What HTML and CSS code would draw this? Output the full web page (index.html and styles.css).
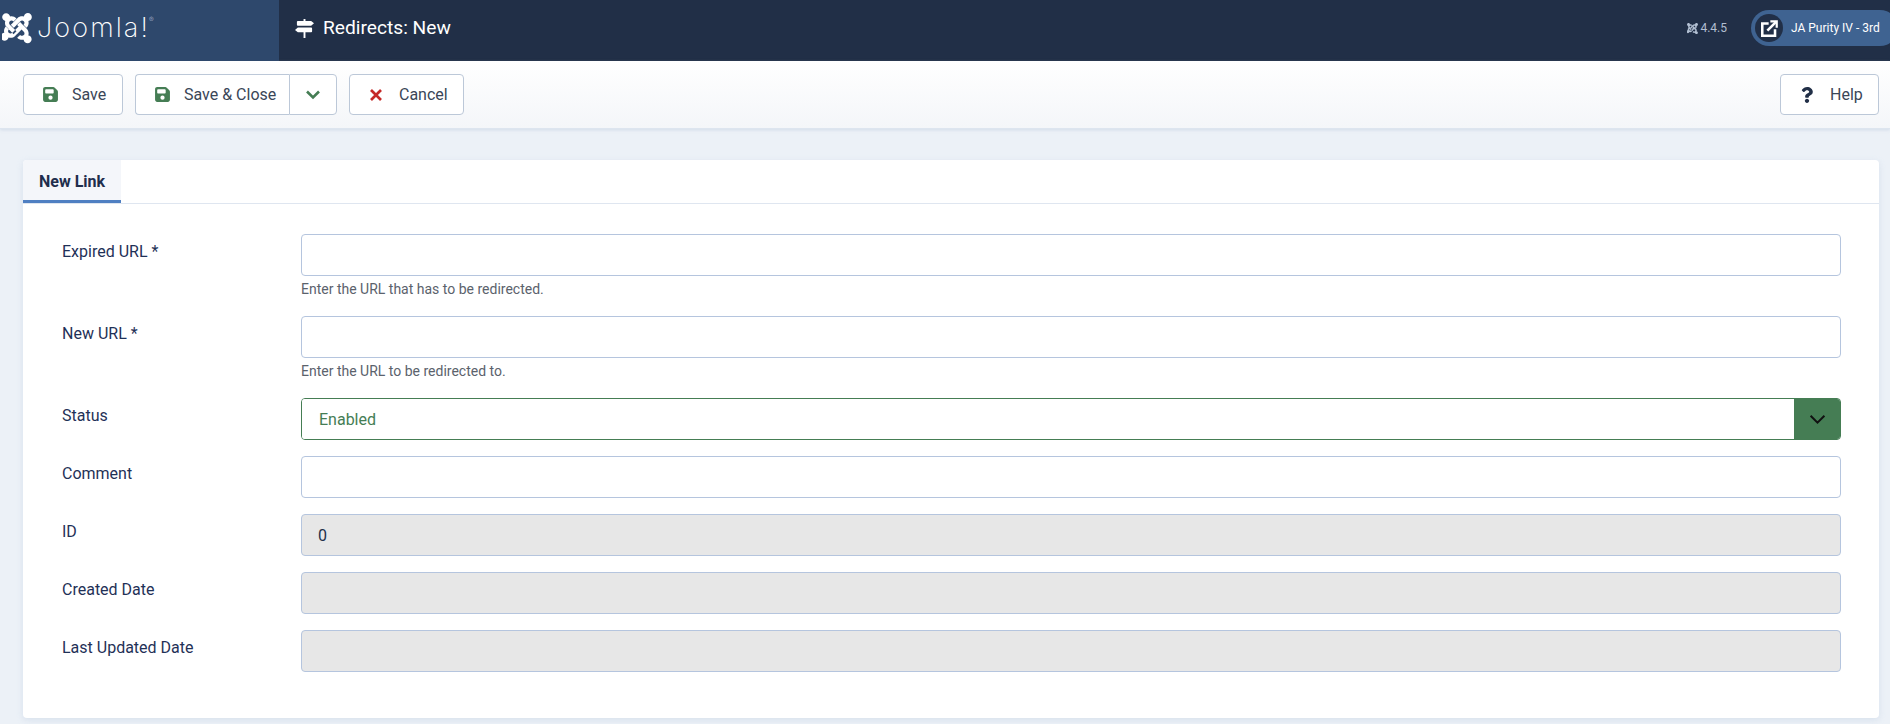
FILE: index.html
```html
<!DOCTYPE html>
<html lang="en">
<head>
<meta charset="utf-8">
<title>Redirects: New</title>
<link rel="stylesheet" href="styles.css">
</head>
<body>
<svg class="defs" width="0" height="0" aria-hidden="true">
  <symbol id="joomla" viewBox="0 0 448 512">
    <path d="M.6 92.1C.6 58.8 27.4 32 60.4 32c30 0 54.5 21.9 59.2 50.2 32.6-7.6 67.1.6 96.5 30l-44.3 44.3c-20.5-20.5-42.6-16.3-55.4-3.5-14.3 14.3-14.3 37.9 0 52.2l99.5 99.5-44 44.3c-87.7-87.2-49.7-49.7-99.8-99.7-26.8-26.5-35-64.8-24.8-98.9C20.4 144.6.6 120.7.6 92.1zm129.5 116.4l44.3 44.3c10-10 89.7-89.7 99.7-99.8 14.3-14.3 37.6-14.3 51.9 0 12.8 12.8 17 35-3.5 55.4l44 44.3c31.2-31.2 38.5-67.6 28.9-101.2 29.2-4.1 51.9-29.2 51.9-59.5 0-33.2-26.8-60.1-59.8-60.1-30.3 0-55.4 22.5-59.5 51.6-33.8-9.9-71.7-1.5-98.3 25.1-18.3 18.3-78 78-99.6 99.9zm266.3 152.2c8.2-32.7-.9-68.5-26.3-93.9-11.6-11.6-37.1-37.3-99.6-99.7l-44.3 44.3c67.7 68 80.2 79.9 99.8 99.8 14.3 14.3 14.3 37.6 0 51.9-12.8 12.8-35 17-55.4-3.5l-44 44.3c27.6 27.9 64.1 36.7 97.7 27.2 3.5 30.2 29.2 53.8 60.1 53.8 33 0 60.1-26.8 60.1-60.1 0-30.9-23.3-56.5-53.8-60.2zm-100.2-87.6l-44.3-44.3c-68.1 68-80 80-99.7 99.8-14.3 14.3-37.6 14.3-51.9 0-12.8-12.8-17-35 3.5-55.4l-44.3-44.3c-27.3 27.3-37 63.9-27.5 97.6-30.5 3.7-54 29.5-54 60.5 0 33.2 26.8 60.1 60.1 60.1 28.9 0 53-20.5 58.9-47.6 35.1 11 73.4 3.1 100.5-24 18.3-18.2 78-77.9 98.7-100.2z"/>
  </symbol>
  <symbol id="save" viewBox="0 0 448 512">
    <path d="M64 32C28.7 32 0 60.7 0 96V416c0 35.3 28.7 64 64 64H384c35.3 0 64-28.7 64-64V173.3c0-17-6.7-33.3-18.7-45.3L352 50.7C340 38.7 323.7 32 306.7 32H64zm0 96c0-17.7 14.3-32 32-32H288c17.7 0 32 14.3 32 32v64c0 17.7-14.3 32-32 32H96c-17.7 0-32-14.3-32-32V128zM224 288a64 64 0 1 1 0 128 64 64 0 1 1 0-128z"/>
  </symbol>
</svg>

<header class="topbar">
  <div class="brand">
    <svg class="brand-mark"><use href="#joomla"/></svg>
    <span class="brand-name">Joomla!<sup class="reg">®</sup></span>
  </div>
  <div class="title-wrap">
    <svg class="title-icon" viewBox="0 0 20 20"><path d="M9 0h2v2h6l3 2.5L17 7H3a1 1 0 0 1-1-1V3a1 1 0 0 1 1-1h6zM3 9h14a1 1 0 0 1 1 1v3a1 1 0 0 1-1 1h-6v6H9v-6H3l-3-2.5z"/></svg>
    <h1 class="page-title">Redirects: New</h1>
  </div>
  <div class="version">
    <svg class="version-icon"><use href="#joomla"/></svg>
    <span>4.4.5</span>
  </div>
  <a class="site-pill" href="#">
    <span class="site-circle">
      <svg class="site-icon" viewBox="0 0 20 20" fill="none" stroke="#fff" stroke-width="3"><path d="M16.5 11v7.5H1.5V4H9"/><path d="M7.5 12.5 18 2"/><path d="M11 1.5h7.5V9" stroke-width="2.6"/></svg>
    </span>
    <span class="site-name">JA Purity IV - 3rd</span>
  </a>
</header>

<nav class="toolbar">
  <button class="btn btn-save" type="button">
    <svg class="icon-save"><use href="#save"/></svg><span>Save</span>
  </button>
  <div class="split">
    <button class="btn btn-split-main" type="button">
      <svg class="icon-save"><use href="#save"/></svg><span>Save &amp; Close</span>
    </button>
    <button class="btn btn-split-arrow" type="button" aria-label="Toggle">
      <svg class="icon-chevron" viewBox="0 0 16 10" fill="none" stroke="#457d54" stroke-width="2.6"><path d="M2 1.5 8 7.5 14 1.5"/></svg>
    </button>
  </div>
  <button class="btn btn-cancel" type="button">
    <svg class="icon-times" viewBox="0 0 12 12" fill="none" stroke="#c52827" stroke-width="2.7"><path d="M1 1l10 10M11 1 1 11"/></svg><span>Cancel</span>
  </button>
  <button class="btn btn-help" type="button">
    <svg class="icon-help" viewBox="0 0 384 512"><path d="M202.021 0C122.202 0 70.503 32.703 29.914 91.026c-7.363 10.58-5.093 25.086 5.178 32.874l43.138 32.709c10.373 7.865 25.132 6.026 33.253-4.148 25.049-31.381 43.63-49.449 82.757-49.449 30.764 0 68.816 19.799 68.816 49.631 0 22.552-18.617 34.134-48.993 51.164-35.423 19.86-82.299 44.576-82.299 106.405V320c0 13.255 10.745 24 24 24h72.471c13.255 0 24-10.745 24-24v-5.773c0-42.86 125.268-44.645 125.268-160.627C377.504 66.256 286.902 0 202.021 0zM192 373.459c-38.196 0-69.271 31.075-69.271 69.271 0 38.195 31.075 69.27 69.271 69.27s69.271-31.075 69.271-69.271-31.075-69.27-69.271-69.27z"/></svg><span>Help</span>
  </button>
</nav>

<main class="content">
  <section class="card">
    <div class="tabs">
      <button class="tab" type="button">New Link</button>
    </div>
    <form class="form">
      <div class="row">
        <label class="label" for="old">Expired URL *</label>
        <div class="controls">
          <input class="input" id="old" type="text">
          <div class="hint">Enter the URL that has to be redirected.</div>
        </div>
      </div>
      <div class="row">
        <label class="label" for="new">New URL *</label>
        <div class="controls">
          <input class="input" id="new" type="text">
          <div class="hint">Enter the URL to be redirected to.</div>
        </div>
      </div>
      <div class="row">
        <label class="label" for="status">Status</label>
        <div class="controls">
          <div class="select-wrap">
            <select class="select" id="status"><option>Enabled</option></select>
            <span class="select-arrow">
              <svg class="select-chevron" viewBox="0 0 16 10" fill="none" stroke="#111" stroke-width="1.9"><path d="M1.5 1.5 8 8l6.5-6.5"/></svg>
            </span>
          </div>
        </div>
      </div>
      <div class="row">
        <label class="label" for="comment">Comment</label>
        <div class="controls"><input class="input" id="comment" type="text"></div>
      </div>
      <div class="row">
        <label class="label" for="id">ID</label>
        <div class="controls"><input class="input" id="id" type="text" value="0" readonly></div>
      </div>
      <div class="row">
        <label class="label" for="created">Created Date</label>
        <div class="controls"><input class="input" id="created" type="text" readonly></div>
      </div>
      <div class="row">
        <label class="label" for="updated">Last Updated Date</label>
        <div class="controls"><input class="input" id="updated" type="text" readonly></div>
      </div>
    </form>
  </section>
</main>
</body>
</html>
```
FILE: styles.css
```css
* { box-sizing: border-box; }
html, body { height: 100%; }
body {
  margin: 0;
  background: #ecf1f7;
  font-family: Roboto, "Liberation Sans", sans-serif;
  font-size: 16px;
  color: #22304a;
  overflow: hidden;
}
.defs { display: block; height: 0; }

/* top bar */
.topbar {
  display: flex;
  align-items: center;
  height: 61px;
  padding-bottom: 5px;
  background: #212f47;
  color: #fff;
  overflow: hidden;
}
.brand {
  display: flex;
  align-items: center;
  width: 279px;
  height: 61px;
  margin-bottom: -5px;
  padding: 0 0 5px 2px;
  background: #2e486c;
  flex: none;
}
.brand-mark { width: 30px; height: 34px; fill: #fff; flex: none; }
.brand-name {
  display: flex;
  margin-left: 5px;
  font-family: Inter, sans-serif;
  font-weight: 200;
  font-size: 27px;
  line-height: 34px;
  letter-spacing: 2.1px;
}
.reg { font-size: 7px; line-height: 1; margin: 5px 0 0 -1px; color: #cfd7e3; }
.title-wrap { display: flex; align-items: center; flex: 1; padding-left: 16px; }
.title-icon { width: 19px; height: 19px; fill: #fff; margin-right: 9px; }
.page-title { margin: 0; font-size: 19.2px; font-weight: 400; line-height: 28px; }
.version {
  display: flex;
  align-items: center;
  gap: 2px;
  color: #b2bfd2;
  font-size: 12px;
  margin-right: 24px;
}
.version-icon { width: 11px; height: 13px; fill: #b2bfd2; }
.site-pill {
  display: flex;
  align-items: center;
  flex: none;
  height: 36px;
  margin-right: -8px;
  width: 147px;
  padding-left: 4px;
  border-radius: 18px;
  background: #3f6391;
  color: #fff;
  text-decoration: none;
}
.site-circle {
  display: flex;
  align-items: center;
  justify-content: center;
  width: 28px;
  height: 28px;
  border-radius: 50%;
  background: #212f47;
  flex: none;
}
.site-icon { width: 17px; height: 17px; }
.site-name { margin-left: 8px; font-size: 12px; white-space: nowrap; }

/* toolbar */
.toolbar {
  display: flex;
  align-items: center;
  gap: 12px;
  height: 68px;
  padding: 0 11px 0 23px;
  background: linear-gradient(#fff, #f4f6f9);
  border-bottom: 1px solid #dde5ef;
  box-shadow: 0 1px 3px rgba(160, 180, 205, 0.35);
}
.btn {
  display: flex;
  align-items: center;
  height: 41px;
  padding: 0;
  background: #fff;
  border: 1px solid #bcc8d8;
  border-radius: 4px;
  color: #3a4657;
  font-family: inherit;
  font-size: 16px;
}
.btn-save { width: 100px; padding-left: 19px; }
.split { display: flex; }
.btn-split-main {
  width: 154px;
  padding-left: 19px;
  border-radius: 4px 0 0 4px;
  border-right: 0;
}
.btn-split-arrow {
  width: 48px;
  justify-content: center;
  border-radius: 0 4px 4px 0;
}
.btn-cancel { width: 115px; padding-left: 20px; }
.btn-help { width: 99px; margin-left: auto; padding-left: 20px; }
.icon-save { width: 15px; height: 17px; fill: #457d54; margin-right: 14px; flex: none; }
.icon-times { width: 12px; height: 12px; margin-right: 17px; flex: none; }
.icon-help { width: 12px; height: 16px; fill: #212f47; margin-right: 17px; flex: none; }
.icon-chevron { width: 16px; height: 10px; }

/* content */
.content { padding: 31px 11px 6px 23px; }
.card {
  height: 558px;
  background: #fff;
  border-radius: 4px;
  box-shadow: 0 2px 6px rgba(170, 190, 215, 0.3);
}
.tabs { display: flex; height: 44px; border-bottom: 1px solid #dfe6f0; }
.tab {
  width: 98px;
  height: 43px;
  padding: 2px 0 0;
  background: #f4f6fa;
  border: 0;
  border-bottom: 3px solid #4f7fc2;
  border-radius: 4px 0 0 0;
  color: #1f2e4d;
  font-family: inherit;
  font-size: 16px;
  font-weight: 700;
}
.form {
  display: flex;
  flex-direction: column;
  gap: 16px;
  padding: 30px 38px 0 39px;
}
.row { display: flex; }
.label { width: 239px; flex: none; padding-top: 6px; line-height: 24px; color: #1f3157; }
.controls { flex: 1; min-width: 0; }
.input {
  display: block;
  width: 100%;
  height: 42px;
  padding: 0 16px;
  background: #fff;
  border: 1px solid #b5c5de;
  border-radius: 4px;
  color: #22304a;
  font-family: inherit;
  font-size: 16px;
  outline: 0;
}
.input[readonly] { background: #e7e7e7; }
.hint { height: 24px; padding-top: 3px; font-size: 14px; line-height: 20px; color: #5b626c; }
.select-wrap {
  display: flex;
  height: 42px;
  border: 1px solid #457d54;
  border-radius: 4px;
  overflow: hidden;
}
.select {
  flex: 1;
  min-width: 0;
  padding: 0 17px;
  border: 0;
  appearance: none;
  background: #fff;
  color: #457d54;
  font-family: inherit;
  font-size: 16px;
  outline: 0;
}
.select-arrow {
  display: flex;
  align-items: center;
  justify-content: center;
  width: 46px;
  background: #457d54;
}
.select-chevron { width: 17px; height: 11px; }
```
